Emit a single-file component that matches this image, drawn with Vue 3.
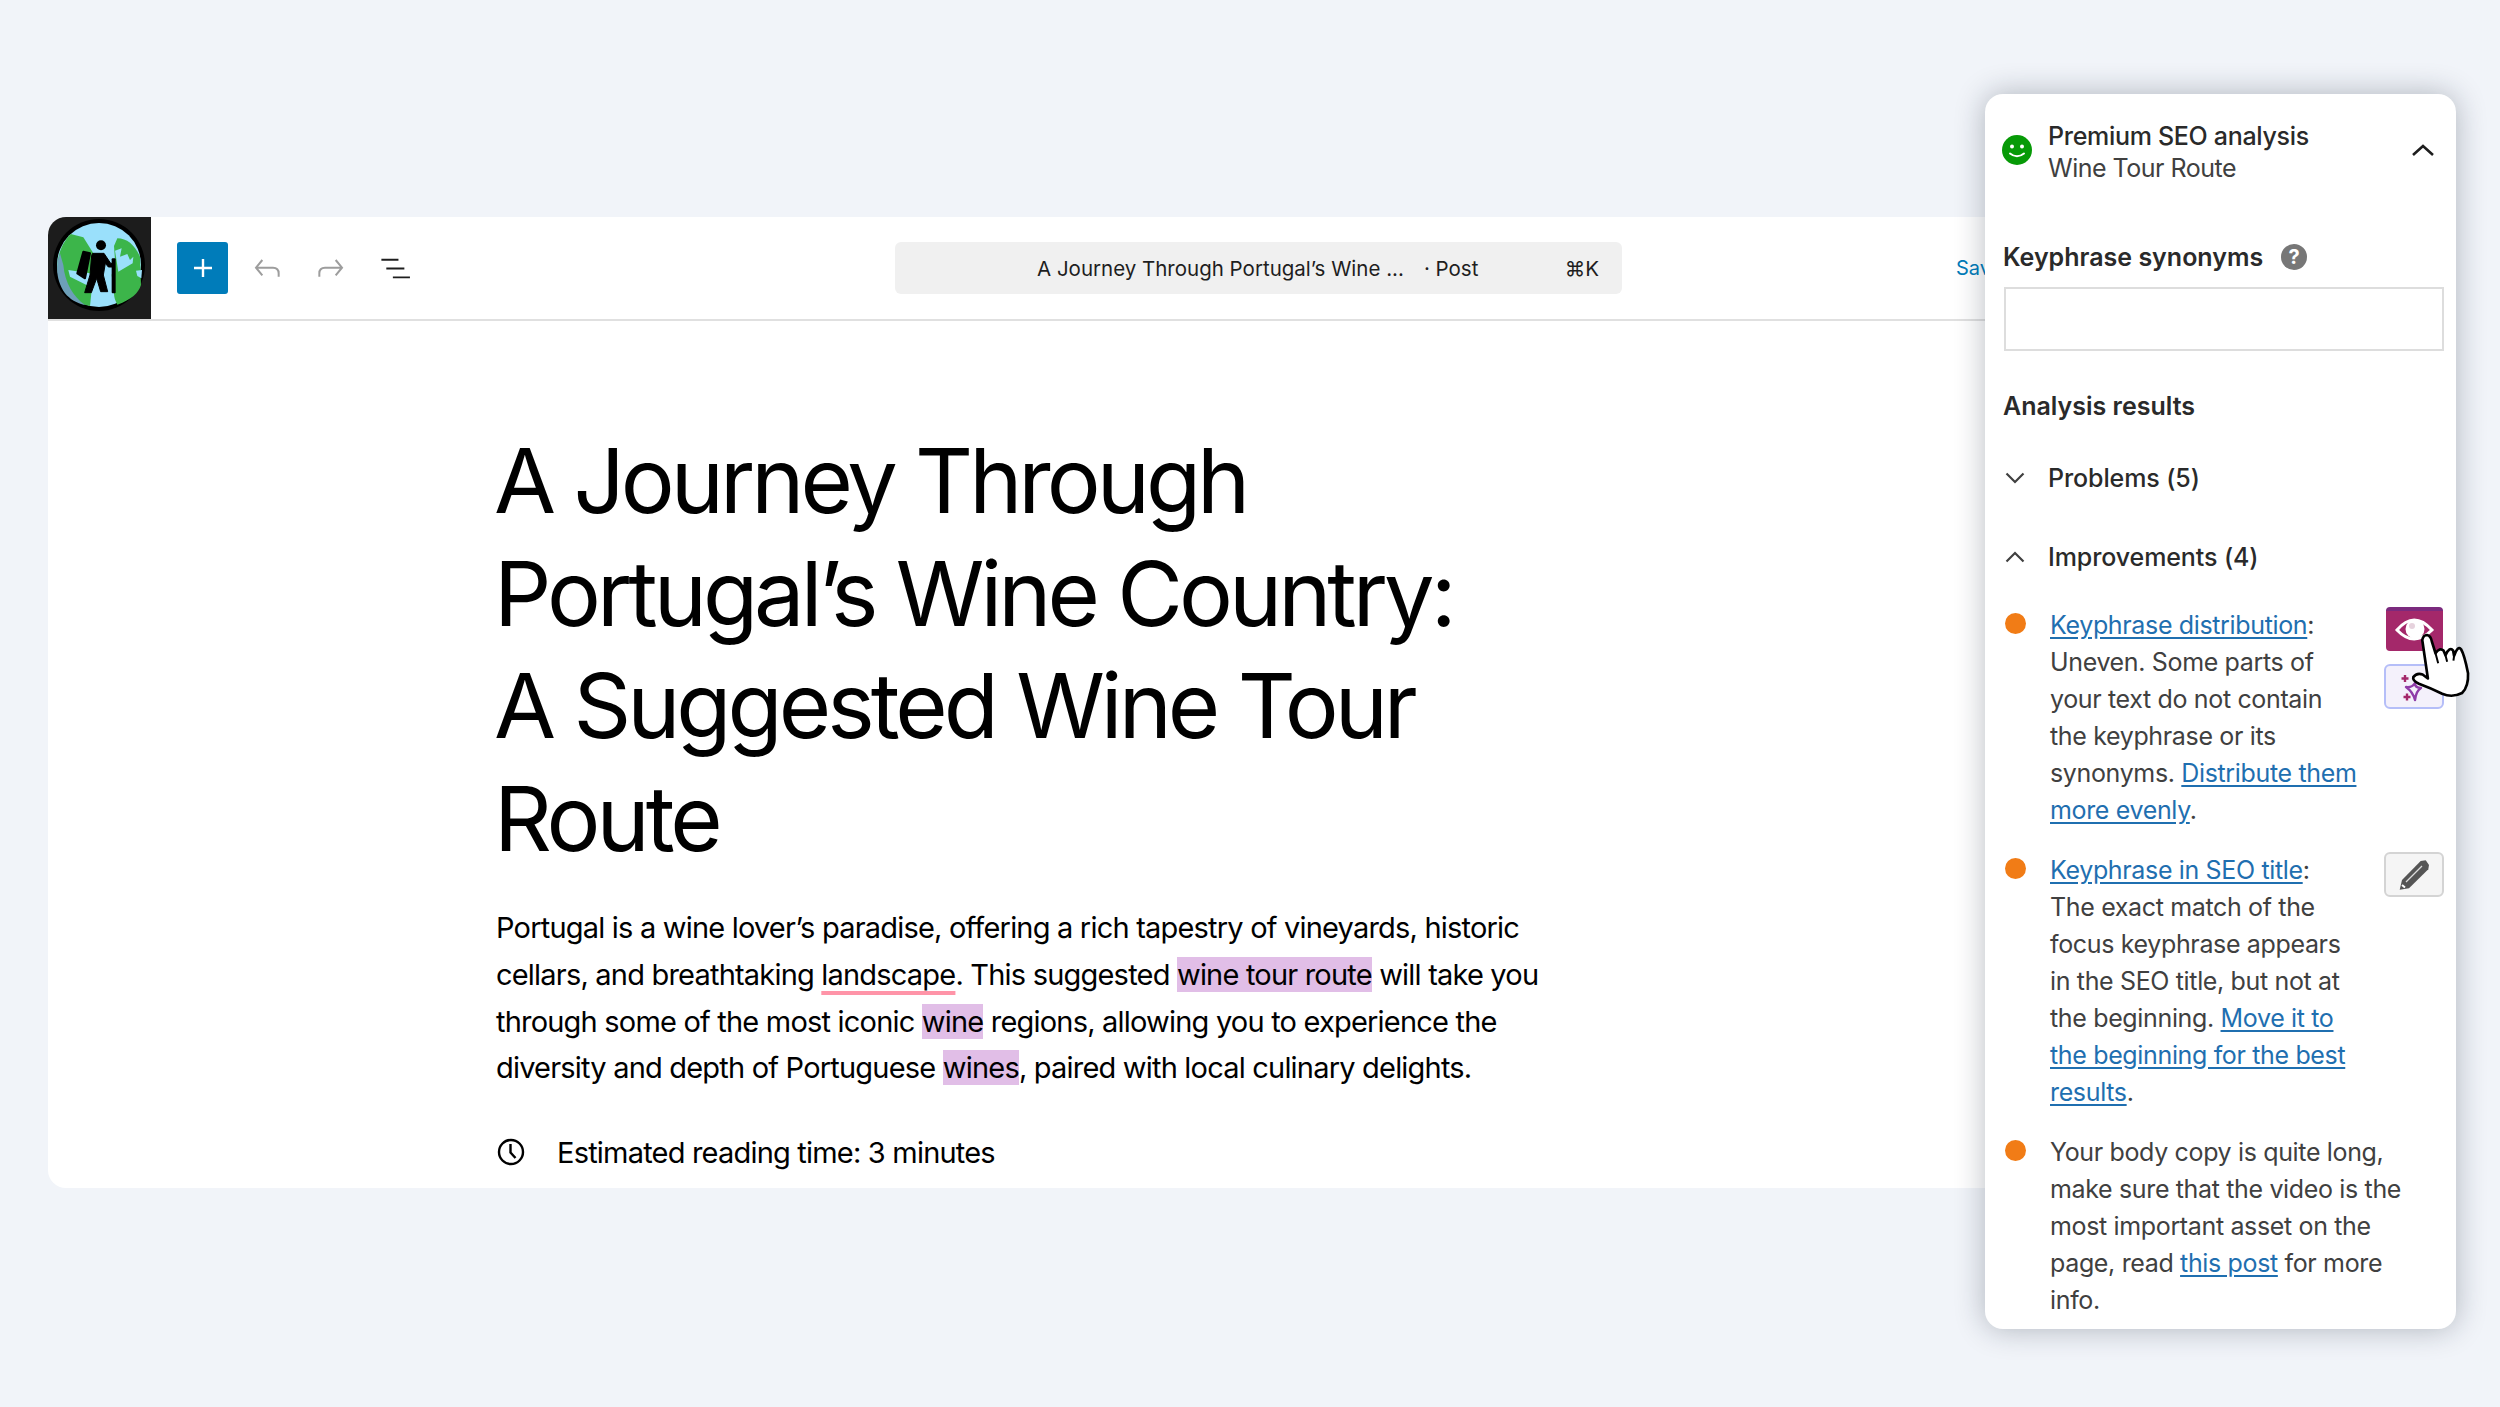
<script setup>
const improvements = 4
</script>

<template>
  <div class="page">
    <section class="editor">
      <header class="toolbar">
        <svg class="logo" viewBox="24 21 309 306">
          <path d="M24 21H333V327H24V66Q24 21 69 21Z" fill="#1c1c1c" />
          <circle cx="177" cy="165" r="138" fill="#000" />
          <circle cx="177" cy="165" r="126" fill="#9ae0fb" />
          <path d="M92 72C55 110 40 170 65 225C85 265 115 282 150 288L155 240L160 130L130 82Z" fill="#3cb54a" />
          <path d="M60 130C45 170 50 215 75 250C90 268 110 280 135 285C100 260 75 220 70 165Z" fill="#6d9fb8" />
          <path d="M222 108L232 85C260 85 285 105 300 140L303 225C295 250 275 268 232 284C225 270 222 262 222 250L215 195L225 150Z" fill="#3cb54a" />
          <path d="M225 122L245 115L240 140L262 132L270 150L280 140L278 160L235 185Z" fill="#9ae0fb" />
          <path d="M288 182L306 180L304 205L292 198Z" fill="#9ae0fb" />
          <path d="M85 180L150 190L150 230L120 215L90 200Z" fill="#9ae0fb" />
          <circle cx="183" cy="106" r="15" fill="#000" />
          <path d="M130 125L150 130L135 205L112 190Z" fill="#000" stroke="#000" stroke-width="6" stroke-linejoin="round" />
          <path d="M158 130H192L212 160H223V171H205L196 160L190 195L203 245H182L170 205L154 248H134L150 195L155 136Z" fill="#000" stroke="#000" stroke-width="3" stroke-linejoin="round" />
          <rect x="215" y="145" width="12" height="105" rx="3" fill="#000" />
        </svg>
        <button class="plus">
          <svg viewBox="0 0 24 24" width="24" height="24"><path d="M12 3V21M3 12H21" stroke="#fff" stroke-width="2.4" fill="none" /></svg>
        </button>
        <div class="tools">
          <svg viewBox="672 176 76 60" width="26" height="20"><path d="M696 182L677 205L696 228M677 205H728Q745 205 745 222V232" fill="none" stroke="#9d9d9d" stroke-width="6" /></svg>
          <svg viewBox="866 176 76 60" width="26" height="20"><path d="M918 182L937 205L918 228M937 205H886Q869 205 869 222V232" fill="none" stroke="#9d9d9d" stroke-width="6" /></svg>
          <svg class="list-icon" viewBox="1052 172 92 64" width="31" height="21"><path d="M1055 177H1107M1070 204H1125M1090 231H1142" fill="none" stroke="#1e1e1e" stroke-width="6" /></svg>
        </div>
        <div class="command">
          <span class="command-title">A Journey Through Portugal’s Wine ...</span>
          <span class="command-type">· Post</span>
          <span class="command-key">⌘K</span>
        </div>
        <span class="save">Save draft</span>
      </header>

      <article class="content">
        <h1>A Journey Through Portugal’s Wine Country: A Suggested Wine Tour Route</h1>
        <p class="intro">
          Portugal is a wine lover’s paradise, offering a rich tapestry of vineyards, historic cellars, and breathtaking <span class="flag">landscape</span>. This suggested <mark>wine tour route</mark> will take you through some of the most iconic <mark>wine</mark> regions, allowing you to experience the diversity and depth of Portuguese <mark>wines</mark>, paired with local culinary delights.
        </p>
        <p class="reading">
          <svg viewBox="0 0 28 28" width="28" height="28"><circle cx="14" cy="14" r="12" fill="none" stroke="#000" stroke-width="2.4" /><path d="M13.5 6V14.5L18.5 20" fill="none" stroke="#000" stroke-width="2.4" /></svg>
          <span>Estimated reading time: 3 minutes</span>
        </p>
      </article>
    </section>

    <aside class="panel">
      <div class="panel-head">
        <svg class="smile" viewBox="0 0 30 30" width="30" height="30">
          <circle cx="15" cy="15" r="15" fill="#079a07" />
          <circle cx="10" cy="11.5" r="2" fill="#fff" />
          <circle cx="20" cy="11.5" r="2" fill="#fff" />
          <path d="M8 18.5Q15 24 22 18.5" fill="none" stroke="#fff" stroke-width="2" stroke-linecap="round" />
        </svg>
        <div class="head-text">
          <div class="head-title">Premium SEO analysis</div>
          <div class="head-sub">Wine Tour Route</div>
        </div>
        <svg class="head-chevron" viewBox="0 0 24 14" width="24" height="14"><path d="M2 12L12 3L22 12" fill="none" stroke="#1e1e1e" stroke-width="2.6" /></svg>
      </div>

      <div class="label-row">
        <strong>Keyphrase synonyms</strong>
        <span class="help">?</span>
      </div>
      <input class="synonyms" type="text" />

      <h2>Analysis results</h2>

      <div class="group-row problems">
        <svg viewBox="0 0 20 12" width="20" height="12"><path d="M1.5 1.5L10 10L18.5 1.5" fill="none" stroke="#404040" stroke-width="2.2" /></svg>
        <span>Problems (5)</span>
      </div>
      <div class="group-row improve">
        <svg viewBox="0 0 20 12" width="20" height="12"><path d="M1.5 10.5L10 2L18.5 10.5" fill="none" stroke="#404040" stroke-width="2.2" /></svg>
        <span>Improvements ({{ improvements }})</span>
      </div>

      <div class="result first">
        <i class="dot"></i>
        <p class="result-text narrow"><a>Keyphrase distribution</a>: Uneven. Some parts of your text do not contain the keyphrase or its synonyms. <a>Distribute them more evenly</a>.</p>
        <div class="actions">
          <button class="action eye">
            <svg viewBox="0 0 57 40" width="57" height="40"><path d="M11 19Q28 -1 46 19Q28 37 11 19Z" fill="none" stroke="#fff" stroke-width="3" /><circle cx="29" cy="18" r="9.5" fill="#fff" /><circle cx="26" cy="15" r="3" fill="#e6d2dd" /></svg>
          </button>
          <button class="action spark">
            <svg viewBox="0 0 60 45" width="60" height="45">
              <path d="M21 11V18M17.5 14.5H24.5M23 29.5V36.5M19.5 33H26.5" fill="none" stroke="#a4286a" stroke-width="2.4" />
              <path d="M22 23Q28 24 31 19Q31 24 37 24Q32 27 31 36Q29 28 22 23Z" fill="none" stroke="#8f3ca8" stroke-width="2.4" stroke-linejoin="round" />
            </svg>
          </button>
        </div>
      </div>

      <div class="result">
        <i class="dot"></i>
        <p class="result-text narrow"><a>Keyphrase in SEO title</a>: The exact match of the focus keyphrase appears in the SEO title, but not at the beginning. <a>Move it to the beginning for the best results</a>.</p>
        <div class="actions">
          <button class="action pencil">
            <svg viewBox="0 0 60 45" width="60" height="45"><path d="M15.7 37.7L18 28L36.7 9L41.7 8.3L45 13L44.3 17.3L25 36.3Z" fill="#555" /><path d="M22 30L38 14" stroke="#ddd" stroke-width="1.2" /><path d="M18 33L21 35.5" stroke="#fff" stroke-width="2" /></svg>
          </button>
        </div>
      </div>

      <div class="result">
        <i class="dot"></i>
        <p class="result-text wide">Your body copy is quite long, make sure that the video is the most important asset on the page, read <a>this post</a> for more info.</p>
      </div>

      <svg class="hand" viewBox="200 120 200 220" width="67" height="73">
        <path d="M245 150Q248 135 259 135Q271 137 274 155L285 190Q298 172 309 182L315 196Q328 168 338 182L341 198Q352 166 362 178Q372 195 383 250Q385 290 365 310Q335 325 305 312Q270 295 235 282Q215 272 218 262Q228 248 246 254L262 266Z" fill="#fff" stroke="#000" stroke-width="8" stroke-linejoin="round" />
        <path d="M285 190L293 220M315 196L320 216M341 198L339 212" fill="none" stroke="#000" stroke-width="6" />
      </svg>
    </aside>
  </div>
</template>

<style scoped>
.page {
  position: relative;
  width: 2500px;
  height: 1407px;
  padding: 217px 0 0 48px;
  box-sizing: border-box;
  overflow: hidden;
  background: #f1f4f9;
  font-family: Inter, "DejaVu Sans", sans-serif;
}
.editor {
  width: 1960px;
  height: 971px;
  background: #fff;
  border-radius: 18px;
  overflow: hidden;
}
.toolbar {
  display: flex;
  align-items: center;
  height: 102px;
  border-bottom: 2px solid #e0e0e0;
}
.toolbar > * { flex: none; }
.logo { width: 103px; height: 102px; }
.plus {
  display: flex;
  align-items: center;
  justify-content: center;
  width: 51px;
  height: 52px;
  margin-left: 26px;
  padding: 0;
  border: 0;
  border-radius: 3px;
  background: #007cba;
}
.tools {
  display: flex;
  align-items: center;
  gap: 38px;
  margin-left: 26px;
}
.list-icon { margin-left: -2px; }
.command {
  display: flex;
  align-items: center;
  width: 727px;
  height: 52px;
  margin-left: 484px;
  padding-left: 142px;
  box-sizing: border-box;
  border-radius: 6px;
  background: #f0f0f0;
  color: #1e1e1e;
  font-size: 20.5px;
  white-space: nowrap;
}
.command-type { margin-left: 20px; }
.command-key { margin-left: auto; margin-right: 23px; }
.save {
  margin-left: 334px;
  color: #007cba;
  font-size: 20px;
  white-space: nowrap;
}
.content { padding: 104px 0 0 448px; }
h1 {
  width: 1000px;
  margin: 0 0 0 -2px;
  color: #000;
  font-size: 90px;
  font-weight: 400;
  line-height: 112.6px;
  letter-spacing: -4px;
}
.intro {
  width: 1060px;
  margin: 30px 0 0;
  color: #000;
  font-size: 29px;
  line-height: 46.7px;
  letter-spacing: -0.8px;
}
mark {
  background: #e1bee7;
  color: inherit;
}
.flag {
  text-decoration: underline #ff94a8 4px;
  text-underline-offset: 6px;
  text-decoration-skip-ink: none;
}
.reading {
  display: flex;
  align-items: center;
  gap: 32px;
  margin: 38px 0 0;
  color: #000;
  font-size: 29px;
  line-height: 46.7px;
  letter-spacing: -0.8px;
}
.reading svg { margin: -4px 0 0 1px; }
.panel {
  position: absolute;
  left: 1985px;
  top: 94px;
  width: 471px;
  height: 1235px;
  box-sizing: border-box;
  padding: 0 12px 0 18px;
  border-radius: 18px;
  background: #fff;
  box-shadow: 0 0 30px rgba(20, 30, 50, .3);
  color: #404040;
  font-size: 25px;
  line-height: 32px;
}
.panel-head {
  display: flex;
  align-items: center;
  gap: 16px;
  height: 112px;
}
.smile { flex: none; margin-left: -1px; }
.head-text { padding-top: 3px; margin-left: 0; }
.head-title { color: #2a2a2a; font-weight: 500; letter-spacing: -0.3px; }
.head-sub { color: #404040; letter-spacing: -0.5px; }
.head-chevron { margin-left: auto; margin-right: 9px; }
.label-row {
  display: flex;
  align-items: center;
  gap: 18px;
  margin-top: 35px;
  height: 32px;
}
.label-row strong { color: #2a2a2a; font-weight: 600; }
.help {
  width: 26px;
  height: 26px;
  border-radius: 50%;
  background: #777;
  color: #fff;
  font-size: 20px;
  font-weight: 700;
  line-height: 26px;
  text-align: center;
}
.synonyms {
  display: block;
  width: 440px;
  height: 64px;
  margin: 14px 0 0 1px;
  box-sizing: border-box;
  border: 2px solid #ddd;
  background: #fff;
}
h2 {
  margin: 39px 0 0;
  color: #2a2a2a;
  font-size: 25px;
  font-weight: 600;
  line-height: 32px;
}
.group-row {
  display: flex;
  align-items: center;
  gap: 23px;
  padding-left: 2px;
  color: #2a2a2a;
  font-weight: 500;
  letter-spacing: -0.1px;
}
.problems { margin-top: 40px; }
.improve { margin-top: 47px; }
.result {
  display: flex;
  align-items: flex-start;
  margin-top: 23px;
}
.result.first { margin-top: 34px; }
.dot {
  flex: none;
  width: 21px;
  height: 21px;
  margin: 6px 0 0 2px;
  border-radius: 50%;
  background: #f17c16;
}
.result-text {
  margin: 0 0 0 24px;
  line-height: 37px;
  letter-spacing: -0.35px;
}
.result-text.narrow { flex: none; width: 308px; }
.result-text.wide { flex: none; width: 370px; }
.result-text a {
  color: #1f6fb0;
  text-decoration: underline;
  text-underline-offset: 3px;
}
.actions {
  display: flex;
  flex-direction: column;
  align-items: center;
  gap: 13px;
  margin-left: auto;
  width: 60px;
}
.action {
  display: block;
  padding: 0;
  box-sizing: border-box;
  line-height: 0;
}
.action svg { display: block; margin: -2px; }
.eye {
  width: 57px;
  height: 44px;
  border: 0;
  border-top: 4px solid #7b2a7e;
  border-radius: 4px;
  background: #a4286a;
}
.eye svg { margin: 0; }
.spark {
  width: 60px;
  height: 45px;
  border: 2px solid #b5bef8;
  border-radius: 6px;
  background: #f4f1fb;
}
.pencil {
  width: 60px;
  height: 45px;
  border: 2px solid #d4d4d4;
  border-radius: 6px;
  background: #f5f5f5;
}
.hand {
  position: absolute;
  left: 422px;
  top: 536px;
}
</style>
